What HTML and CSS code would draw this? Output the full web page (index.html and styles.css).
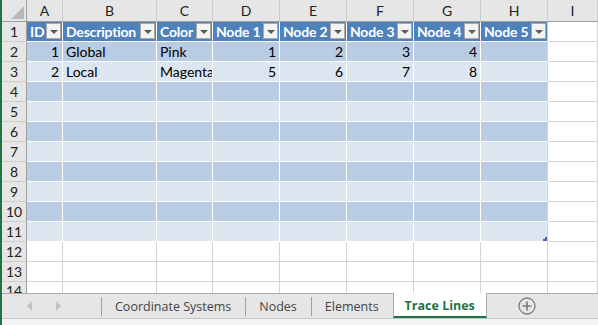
FILE: index.html
```html
<!DOCTYPE html>
<html lang="en">
<head>
    <meta charset="UTF-8">
    <title>Trace Lines</title>
    <link rel="stylesheet" href="styles.css">
</head>
<body>
    <div class="window">
        <div class="sheet">
            <div class="row hdr">
                <div class="rh corner"><span class="tri"></span></div>
                <div class="ch">A</div><div class="ch">B</div><div class="ch">C</div><div class="ch">D</div>
                <div class="ch">E</div><div class="ch">F</div><div class="ch">G</div><div class="ch">H</div><div class="ch">I</div>
            </div>
            <div class="row th">
                <div class="rh">1</div>
                <div class="c">ID<span class="dd"></span></div>
                <div class="c">Description<span class="dd"></span></div>
                <div class="c">Color<span class="dd"></span></div>
                <div class="c">Node 1<span class="dd"></span></div>
                <div class="c">Node 2<span class="dd"></span></div>
                <div class="c">Node 3<span class="dd"></span></div>
                <div class="c">Node 4<span class="dd"></span></div>
                <div class="c last">Node 5<span class="dd"></span></div>
                <div class="c out"></div>
            </div>
            <div class="row dark">
                <div class="rh">2</div>
                <div class="c num">1</div><div class="c">Global</div><div class="c">Pink</div>
                <div class="c num">1</div><div class="c num">2</div><div class="c num">3</div><div class="c num">4</div>
                <div class="c last"></div><div class="c out"></div>
            </div>
            <div class="row light">
                <div class="rh">3</div>
                <div class="c num">2</div><div class="c">Local</div><div class="c">Magenta</div>
                <div class="c num">5</div><div class="c num">6</div><div class="c num">7</div><div class="c num">8</div>
                <div class="c last"></div><div class="c out"></div>
            </div>
            <div class="row dark">
                <div class="rh">4</div>
                <div class="c"></div><div class="c"></div><div class="c"></div><div class="c"></div><div class="c"></div>
                <div class="c"></div><div class="c"></div><div class="c last"></div><div class="c out"></div>
            </div>
            <div class="row light">
                <div class="rh">5</div>
                <div class="c"></div><div class="c"></div><div class="c"></div><div class="c"></div><div class="c"></div>
                <div class="c"></div><div class="c"></div><div class="c last"></div><div class="c out"></div>
            </div>
            <div class="row dark">
                <div class="rh">6</div>
                <div class="c"></div><div class="c"></div><div class="c"></div><div class="c"></div><div class="c"></div>
                <div class="c"></div><div class="c"></div><div class="c last"></div><div class="c out"></div>
            </div>
            <div class="row light">
                <div class="rh">7</div>
                <div class="c"></div><div class="c"></div><div class="c"></div><div class="c"></div><div class="c"></div>
                <div class="c"></div><div class="c"></div><div class="c last"></div><div class="c out"></div>
            </div>
            <div class="row dark">
                <div class="rh">8</div>
                <div class="c"></div><div class="c"></div><div class="c"></div><div class="c"></div><div class="c"></div>
                <div class="c"></div><div class="c"></div><div class="c last"></div><div class="c out"></div>
            </div>
            <div class="row light">
                <div class="rh">9</div>
                <div class="c"></div><div class="c"></div><div class="c"></div><div class="c"></div><div class="c"></div>
                <div class="c"></div><div class="c"></div><div class="c last"></div><div class="c out"></div>
            </div>
            <div class="row dark">
                <div class="rh">10</div>
                <div class="c"></div><div class="c"></div><div class="c"></div><div class="c"></div><div class="c"></div>
                <div class="c"></div><div class="c"></div><div class="c last"></div><div class="c out"></div>
            </div>
            <div class="row light">
                <div class="rh">11</div>
                <div class="c"></div><div class="c"></div><div class="c"></div><div class="c"></div><div class="c"></div>
                <div class="c"></div><div class="c"></div><div class="c last"><span class="handle"></span></div><div class="c out"></div>
            </div>
            <div class="row blank">
                <div class="rh">12</div>
                <div class="c"></div><div class="c"></div><div class="c"></div><div class="c"></div><div class="c"></div>
                <div class="c"></div><div class="c"></div><div class="c"></div><div class="c"></div>
            </div>
            <div class="row blank">
                <div class="rh">13</div>
                <div class="c"></div><div class="c"></div><div class="c"></div><div class="c"></div><div class="c"></div>
                <div class="c"></div><div class="c"></div><div class="c"></div><div class="c"></div>
            </div>
            <div class="row blank cut">
                <div class="rh">14</div>
                <div class="c"></div><div class="c"></div><div class="c"></div><div class="c"></div><div class="c"></div>
                <div class="c"></div><div class="c"></div><div class="c"></div><div class="c"></div>
            </div>
        </div>

        <div class="tabbar">
            <div class="nav">
                <svg width="8" height="10" viewBox="0 0 8 10"><path d="M6 0 L1 5 L6 10 Z" fill="#c3c3c3"/></svg>
                <svg width="8" height="10" viewBox="0 0 8 10"><path d="M2 0 L7 5 L2 10 Z" fill="#c3c3c3"/></svg>
            </div>
            <div class="tab">Coordinate Systems</div>
            <div class="tab">Nodes</div>
            <div class="tab">Elements</div>
            <div class="tab active">Trace Lines</div>
            <div class="add">
                <svg width="18" height="18" viewBox="0 0 18 18">
                    <circle cx="9" cy="9" r="8" fill="none" stroke="#7b7b7b" stroke-width="1.3"/>
                    <path d="M9 4.5 V13.5 M4.5 9 H13.5" stroke="#7b7b7b" stroke-width="1.6"/>
                </svg>
            </div>
        </div>
        <div class="status"></div>
    </div>
</body>
</html>
```

FILE: styles.css
```css
body {
    margin: 0;
    font-family: 'Lato', 'Liberation Sans', sans-serif;
    background: #fff;
}
.window {
    width: 598px;
    height: 325px;
    border-left: 2px solid #217346;
    box-sizing: border-box;
    overflow: hidden;
    display: flex;
    flex-direction: column;
}
.sheet {
    height: 293px;
    overflow: hidden;
    display: flex;
    flex-direction: column;
}
.row {
    display: grid;
    grid-template-columns: 25px 36px 94px 56px 67px 67px 67px 67px 67px 1fr;
    height: 20px;
    flex: none;
}
.row.hdr {
    height: 22px;
}
.row > div {
    box-sizing: border-box;
    border-right: 1px solid #d4d4d4;
    border-bottom: 1px solid #d4d4d4;
    font-size: 14px;
    line-height: 19px;
    white-space: nowrap;
    overflow: hidden;
    position: relative;
}
.rh {
    background: #e6e6e6;
    color: #222;
    text-align: center;
    border-right-color: #9e9e9e !important;
    border-bottom-color: #cdcdcd !important;
    font-size: 14px !important;
}
.ch {
    background: #e6e6e6;
    color: #222;
    text-align: center;
    font-size: 14px !important;
    line-height: 21px !important;
    border-right-color: #cdcdcd !important;
    border-bottom-color: #9e9e9e !important;
}
.corner {
    border-bottom-color: #9e9e9e !important;
}
.tri {
    position: absolute;
    right: 2px;
    bottom: 2px;
    width: 13px;
    height: 13px;
    background: #b9b9b9;
    clip-path: polygon(100% 0, 100% 100%, 0 100%);
}
.c {
    padding: 0 3px;
    color: #000;
}
.num {
    text-align: right;
}
.th .c {
    background: #4f81bd;
    color: #fff;
    font-weight: bold;
    border-color: #fff;
    letter-spacing: -0.2px;
}
.dark .c {
    background: #b8cce4;
    border-color: #fff;
}
.light .c {
    background: #dce6f1;
    border-color: #fff;
}
.row .c.last {
    border-right-color: #d4d4d4;
}
.row .c.out {
    background: #fff;
    border-color: #d4d4d4;
}
.dd {
    position: absolute;
    right: 1px;
    top: 1px;
    width: 15px;
    height: 16px;
    box-sizing: border-box;
    background: #f3f3f3;
    border: 1px solid #a9a9a9;
}
.dd::after {
    content: "";
    position: absolute;
    left: 3px;
    top: 6px;
    border-left: 4px solid transparent;
    border-right: 4px solid transparent;
    border-top: 4px solid #595959;
}
.handle {
    position: absolute;
    right: 0;
    bottom: 0;
    width: 4px;
    height: 4px;
    background: #4a5fc1;
    clip-path: polygon(100% 0, 100% 100%, 0 100%, 0 50%, 50% 50%, 50% 0);
}
.row.cut {
    height: 11px;
}
.row.cut > div {
    border-bottom: none;
    line-height: 17px;
}
.tabbar {
    height: 26px;
    flex: none;
    box-sizing: border-box;
    border-top: 1px solid #ababab;
    border-bottom: 1px solid #c6c6c6;
    background: #e6e6e6;
    display: flex;
    align-items: stretch;
    font-family: 'Open Sans', 'Liberation Sans', sans-serif;
    font-size: 12.5px;
    color: #444;
}
.nav {
    width: 99px;
    display: flex;
    align-items: center;
    gap: 20px;
    padding-left: 24px;
    box-sizing: border-box;
}
.tab {
    display: flex;
    align-items: center;
    padding: 1px 14px 0;
    position: relative;
}
.tab::before {
    content: "";
    position: absolute;
    left: 0;
    top: 3px;
    bottom: 2px;
    border-left: 1px solid #a0a0a0;
}
.tab.active {
    background: #fff;
    color: #217346;
    font-weight: bold;
    padding: 1px 11px 0;
    margin-top: -1px;
    border-left: 1px solid #ababab;
    border-right: 1px solid #ababab;
    border-bottom: 2px solid #217346;
}
.tab.active::before {
    display: none;
}
.add {
    flex: 1;
    display: flex;
    align-items: center;
    padding-left: 31px;
}
.status {
    flex: 1;
    background: #f3f3f3;
}
```
